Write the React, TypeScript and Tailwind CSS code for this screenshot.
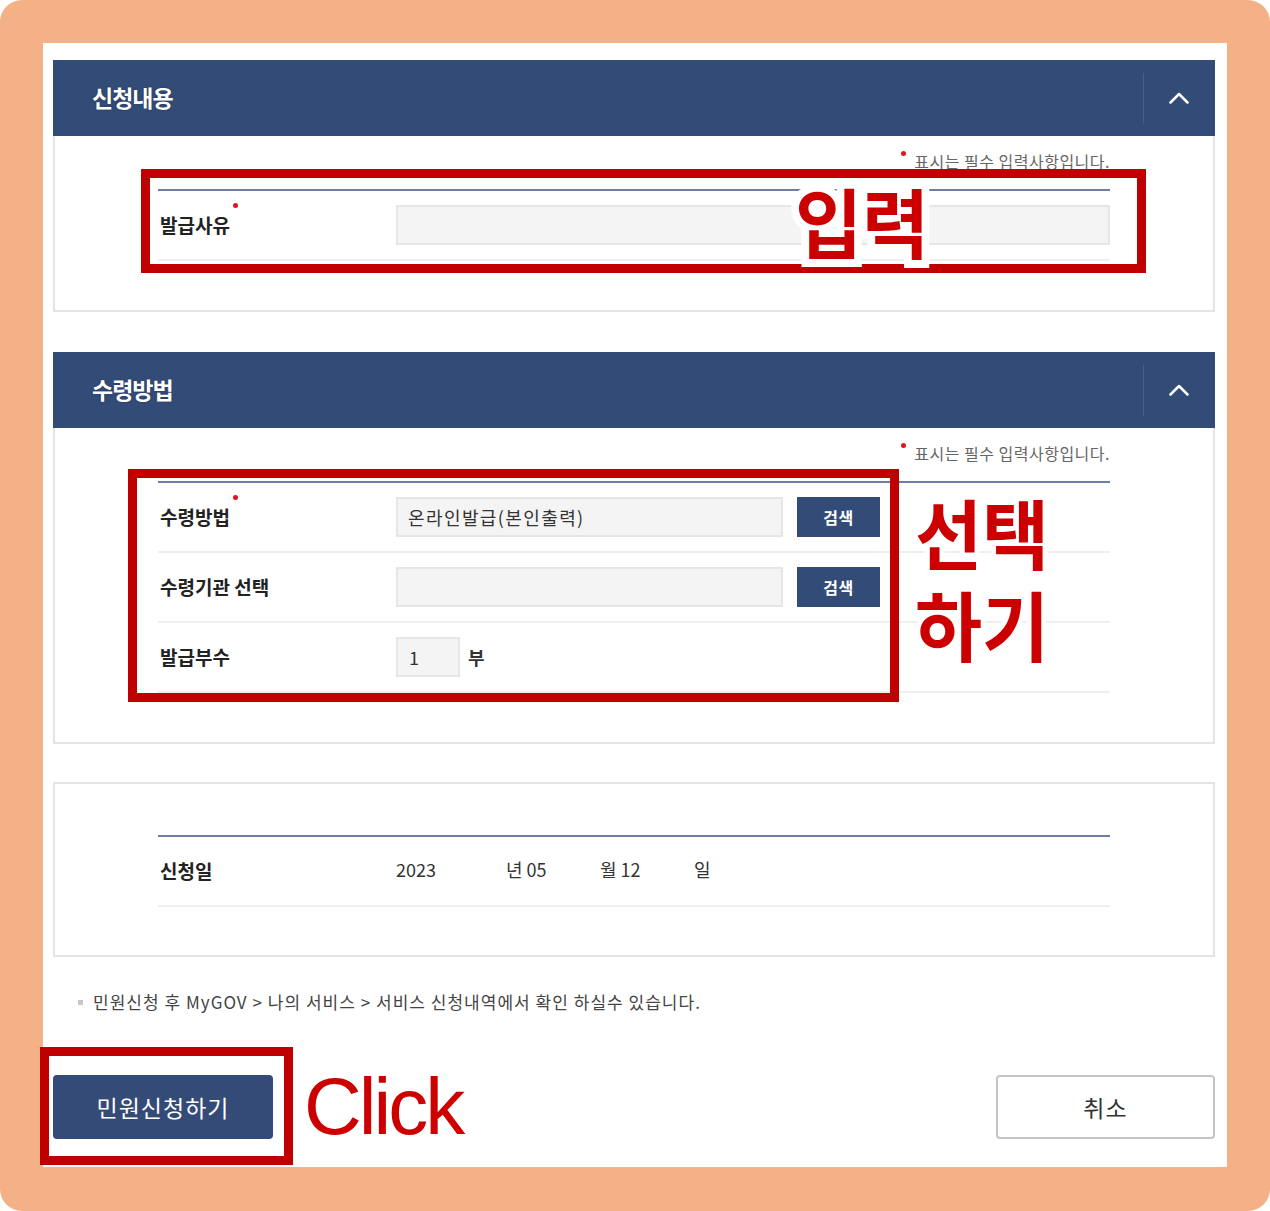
import React from "react";

function Chevron() {
  return (
    <svg width="20" height="12" viewBox="0 0 20 12">
      <path d="M1.5 10.5 L10 2 L18.5 10.5" stroke="white" strokeWidth="2.5" fill="none" strokeLinecap="round" strokeLinejoin="round" />
    </svg>
  );
}

function Dot({ className }: { className: string }) {
  return <span className={`absolute w-[5px] h-[5px] rounded-full bg-[#e8121b] ${className}`} />;
}

function Header({ title }: { title: string }) {
  return (
    <div className="h-[76px] bg-[#334b77] flex items-center">
      <div className="flex-1 pl-[39px] text-white text-[23px] leading-[30px] font-bold tracking-[-1px] -mt-[2px] [text-shadow:0_0_2px_rgba(0,0,0,0.35)]">
        {title}
      </div>
      <div className="w-px h-[51px] bg-[#4a5e8a]" />
      <div className="w-[71px] pr-[2px] flex justify-center items-center">
        <Chevron />
      </div>
    </div>
  );
}

function Section({ title, children, className }: { title: string; children: React.ReactNode; className?: string }) {
  return (
    <div className={className}>
      <Header title={title} />
      <div className="border-x-2 border-b-2 border-[#e3e3e3] px-[103px] pt-[15px] pb-[49px]">
        <div className="h-[20px] flex justify-end items-center">
          <span className="relative inline-block text-[16px] leading-[20px] text-[#666] tracking-[0.5px]">
            <Dot className="-left-[13px] top-0" />
            표시는 필수 입력사항입니다.
          </span>
        </div>
        <div className="mt-[18px] border-t-2 border-[#6d7fa3]">{children}</div>
      </div>
    </div>
  );
}

function Row({ label, required, children }: { label: string; required?: boolean; children?: React.ReactNode }) {
  return (
    <div className="h-[70px] border-b-2 border-[#efefef] flex items-center">
      <div className="w-[238px] shrink-0 pl-[2px]">
        <span className="relative inline-block text-[19px] leading-[24px] font-bold text-[#222]">
          {label}
          {required && <Dot className="-right-[8px] -top-[10px]" />}
        </span>
      </div>
      <div className="flex-1 flex items-center">{children}</div>
    </div>
  );
}

function SearchBtn() {
  return (
    <div className="ml-[14px] w-[83px] h-[40px] bg-[#334b77] flex items-center justify-center text-white text-[16px] leading-[20px] font-bold tracking-[0.5px]">
      검색
    </div>
  );
}

function Halo({ children, className, stroke }: { children: React.ReactNode; className: string; stroke: string }) {
  return (
    <div className={`absolute ${className}`}>
      <div className="relative">
        <div className={`text-white ${stroke}`}>{children}</div>
        <div className="absolute inset-0 text-[#cc0000]">{children}</div>
      </div>
    </div>
  );
}

export default function App() {
  return (
    <div className="w-[1270px] h-[1211px] bg-white font-['Noto_Sans_CJK_KR',sans-serif]">
      <div className="relative w-full h-full bg-[#f3b185] rounded-[22px] pt-[43px] px-[43px] pb-[44px]">
        <div className="bg-white h-full pl-[10px] pr-[12px] pt-[17px] flex flex-col">
          <Section title="신청내용">
            <Row label="발급사유" required>
              <div className="flex-1 h-[40px] bg-[#f4f4f4] border-2 border-[#e6e6e6]" />
            </Row>
          </Section>

          <Section title="수령방법" className="mt-[40px]">
            <Row label="수령방법" required>
              <div className="w-[387px] h-[40px] bg-[#f4f4f4] border-2 border-[#e6e6e6] pl-[10px] flex items-center text-[18px] leading-[24px] text-[#333] tracking-[1.4px]">
                온라인발급(본인출력)
              </div>
              <SearchBtn />
            </Row>
            <Row label="수령기관 선택">
              <div className="w-[387px] h-[40px] bg-[#f4f4f4] border-2 border-[#e6e6e6]" />
              <SearchBtn />
            </Row>
            <Row label="발급부수">
              <div className="w-[64px] h-[40px] bg-[#f4f4f4] border-2 border-[#e6e6e6] pl-[11px] flex items-center text-[18px] leading-[24px] text-[#333]">
                1
              </div>
              <span className="ml-[8px] text-[18px] leading-[24px] text-[#333] font-bold">부</span>
            </Row>
          </Section>

          <div className="mt-[38px] border-2 border-[#e3e3e3] px-[103px] pt-[51px] pb-[48px]">
            <div className="border-t-2 border-[#6d7fa3]">
              <Row label="신청일">
                <div className="flex items-center text-[18px] leading-[24px] text-[#333] -mt-[4px]">
                  <span className="w-[110px]">2023</span>
                  <span className="w-[94px]">년 05</span>
                  <span className="w-[94px]">월 12</span>
                  <span>일</span>
                </div>
              </Row>
            </div>
          </div>

          <div className="mt-[35px] h-[20px] flex items-center pl-[25px]">
            <span className="w-[5px] h-[5px] bg-[#c8c8c8] mr-[10px]" />
            <span className="text-[17px] leading-[20px] text-[#444] tracking-[1.02px]">
              민원신청 후 MyGOV &gt; 나의 서비스 &gt; 서비스 신청내역에서 확인 하실수 있습니다.
            </span>
          </div>

          <div className="mt-[63px] flex justify-between items-center">
            <div className="w-[220px] h-[64px] rounded-[4px] bg-[#344b78] flex items-center justify-center text-white text-[23px] leading-[28px] tracking-[1px]">
              민원신청하기
            </div>
            <div className="w-[219px] h-[64px] rounded-[4px] border-2 border-[#c4c4c4] bg-white flex items-center justify-center text-[#333] text-[23px] leading-[28px] tracking-[1px]">
              취소
            </div>
          </div>
        </div>

        {/* annotation overlays */}
        <div className="absolute left-[141px] top-[169px] w-[1005px] h-[104px] border-[9px] border-[#c00000]" />
        <div className="absolute left-[128px] top-[469px] w-[771px] h-[233px] border-[9px] border-[#c00000]" />
        <div className="absolute left-[40px] top-[1047px] w-[253px] h-[118px] border-[9px] border-[#c00000]" />

        <Halo className="left-[795px] top-[174px]" stroke="[-webkit-text-stroke:16px_white]">
          <div className="text-[76px] leading-[92px] font-bold scale-x-[0.96] origin-left whitespace-nowrap">입력</div>
        </Halo>

        <Halo className="left-[915px] top-[485px]" stroke="[-webkit-text-stroke:10px_white]">
          <div className="text-[76px] leading-[92px] font-bold scale-x-[0.96] origin-left whitespace-nowrap">
            선택
            <br />
            하기
          </div>
        </Halo>

        <div className="absolute left-[304px] top-[1067px] font-['Liberation_Sans',Arial,sans-serif] text-[80px] leading-none text-[#cc0000] tracking-[-3px]">
          Click
        </div>
      </div>
    </div>
  );
}
